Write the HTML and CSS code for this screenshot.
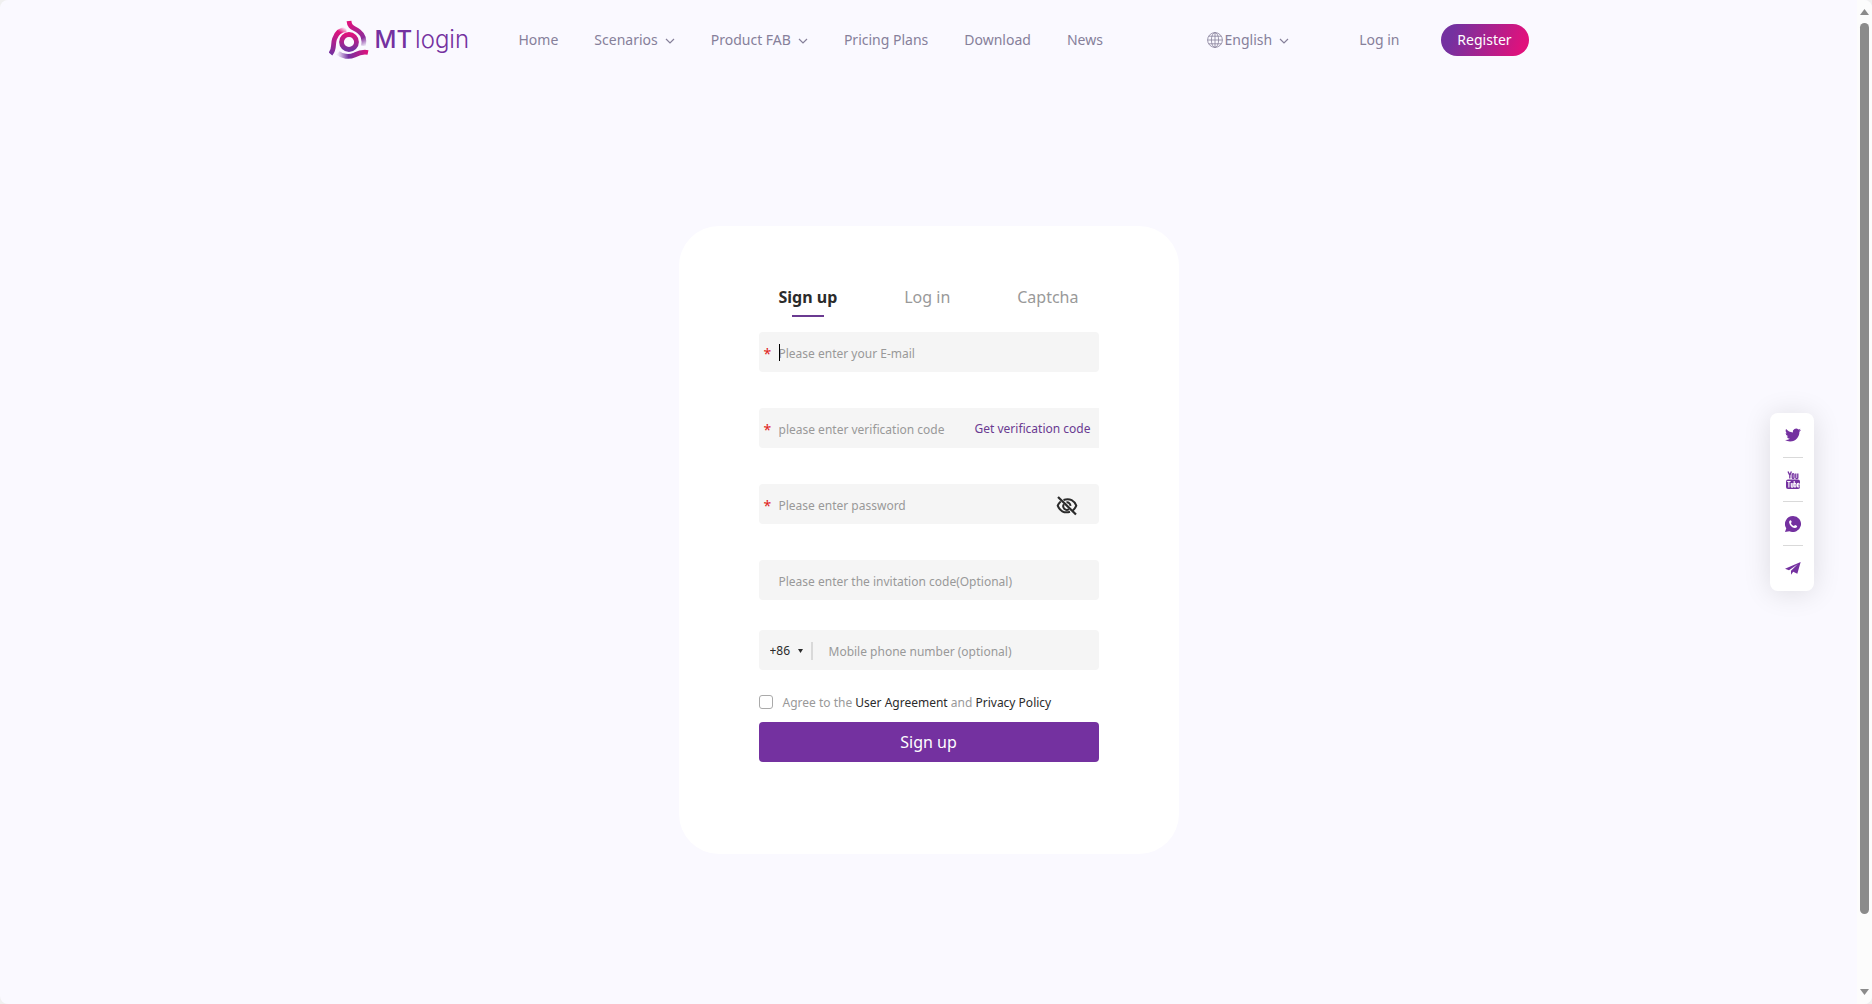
FILE: index.html
```html
<!DOCTYPE html>
<html lang="en">
<head>
<meta charset="utf-8">
<meta name="viewport" content="width=device-width, initial-scale=1">
<title>MT login - Sign up</title>
<link rel="stylesheet" href="styles.css">
</head>
<body>
<div class="window">
  <div class="page">
    <header class="header">
      <a class="logo" href="#" aria-label="MT login">
        <svg class="logo-mark" viewBox="0 0 40 40" fill="none" stroke-width="4.8" aria-hidden="true">
          <defs>
            <linearGradient id="ga" gradientUnits="userSpaceOnUse" x1="18" y1="9" x2="2" y2="34"><stop offset="0" stop-color="#e8107a" stop-opacity="0"/><stop offset=".22" stop-color="#e0117c"/><stop offset="1" stop-color="#7431a0"/></linearGradient>
            <linearGradient id="gb" gradientUnits="userSpaceOnUse" x1="22" y1="1" x2="35" y2="27"><stop offset="0" stop-color="#e0117c"/><stop offset=".7" stop-color="#8b2c9a"/><stop offset="1" stop-color="#7431a0" stop-opacity="0"/></linearGradient>
            <linearGradient id="gc" gradientUnits="userSpaceOnUse" x1="9" y1="34" x2="39" y2="33"><stop offset="0" stop-color="#7431a0" stop-opacity=".1"/><stop offset=".35" stop-color="#7431a0"/><stop offset="1" stop-color="#e0117c"/></linearGradient>
            <linearGradient id="gd" x1="0" y1="0" x2="0" y2="1"><stop offset="0" stop-color="#dc137d"/><stop offset="1" stop-color="#7431a0"/></linearGradient>
          </defs>
          <path stroke="url(#ga)" d="M1.5 34C6 29 3.5 25 5.5 19C7.500 13 12 9.500 17.500 9.500"/>
          <path stroke="url(#gb)" d="M20 1C20.500 8 25 7.500 30 11.500C34.500 15 35.500 21 34.500 26"/>
          <path stroke="url(#gc)" d="M9 33C13 36.500 20 37.500 25.500 35C30.500 32.500 34 31.500 39 32.500"/>
          <circle cx="20" cy="22" r="7.500" stroke="url(#gd)"/>
        </svg>
        <span class="logo-text"><span class="logo-mt">MT</span><span class="logo-login">login</span></span>
      </a>
      <nav class="nav">
        <a href="#">Home</a>
        <a href="#">Scenarios <svg class="chev" viewBox="0 0 10 6"><path d="M1 1l4 4 4-4"/></svg></a>
        <a href="#">Product FAB <svg class="chev" viewBox="0 0 10 6"><path d="M1 1l4 4 4-4"/></svg></a>
        <a href="#">Pricing Plans</a>
        <a href="#">Download</a>
        <a href="#">News</a>
      </nav>
      <div class="account">
        <button class="lang" type="button">
          <svg class="globe" viewBox="0 0 16 16"><circle cx="8" cy="8" r="7.400"/><ellipse cx="8" cy="8" rx="3.600" ry="7.400"/><path d="M8 .5v15M.5 8h15M1.700 4.200h12.600M1.700 11.800h12.600"/></svg>
          English
          <svg class="chev" viewBox="0 0 10 6"><path d="M1 1l4 4 4-4"/></svg>
        </button>
        <a class="login-link" href="#">Log in</a>
        <a class="register" href="#">Register</a>
      </div>
    </header>

    <main class="main">
      <form class="card">
        <div class="tabs">
          <button class="tab active" type="button">Sign up</button>
          <button class="tab" type="button">Log in</button>
          <button class="tab" type="button">Captcha</button>
        </div>
        <div class="fields">
          <div class="field required"><input class="text" type="email" aria-label="E-mail" placeholder="Please enter your E-mail"><span class="caret"></span></div>
          <div class="field required square"><input class="text" type="text" aria-label="Verification code" placeholder="please enter verification code"><button class="get-code" type="button">Get verification code</button></div>
          <div class="field required"><input class="text" type="password" aria-label="Password" placeholder="Please enter password">
            <button class="eye" type="button" aria-label="Show password"><svg viewBox="0 0 22 20" fill="none" stroke="#2b2b2b" stroke-width="2"><path d="M7.500 4C14 1.500 18.500 5 20.300 9.700C19.500 11.700 18.300 13.300 16.700 14.500M14 15.800C8 17.700 3.500 14.500 1.700 9.700C2.400 7.900 3.400 6.500 4.700 5.400"/><path d="M7.900 8.200a3.600 3.600 0 0 0 5 5M10.500 6.300a3.500 3.500 0 0 1 3.900 3.600"/><path stroke-width="2.200" d="M2 1l18 17.500"/></svg></button>
          </div>
          <div class="field"><input class="text" type="text" aria-label="Invitation code" placeholder="Please enter the invitation code(Optional)"></div>
        </div>
        <div class="field phone">
          <div class="code-box">
            <select class="code" aria-label="Country code"><option>+86</option></select>
            <svg class="arrow" viewBox="0 0 5 4"><path d="M0 0h5L2.500 4z"/></svg>
          </div>
          <input class="text" type="tel" aria-label="Mobile phone number" placeholder="Mobile phone number (optional)">
        </div>
        <div class="agree">
          <input id="agree" type="checkbox">
          <label for="agree">Agree to the <a href="#">User Agreement</a> and <a href="#">Privacy Policy</a></label>
        </div>
        <button class="submit" type="submit">Sign up</button>
      </form>
    </main>
  </div>

  <div class="scrollbar" aria-hidden="true">
    <svg class="sb-arrow" viewBox="0 0 9 6"><path d="M4.500 0L9 6H0z"/></svg>
    <div class="track"><div class="thumb"></div></div>
    <svg class="sb-arrow" viewBox="0 0 9 6"><path d="M0 0h9L4.500 6z"/></svg>
  </div>
</div>

<aside class="social">
  <a href="#" aria-label="Twitter"><svg viewBox="0 0 24 24"><path d="M23.950 4.570a10 10 0 0 1-2.820.770 4.960 4.960 0 0 0 2.160-2.720c-.950.550-2 .950-3.130 1.180a4.920 4.920 0 0 0-8.380 4.480C7.690 8.090 4.070 6.130 1.640 3.160a4.820 4.820 0 0 0-.670 2.480c0 1.710.870 3.210 2.190 4.100a4.900 4.900 0 0 1-2.230-.620v.060a4.920 4.920 0 0 0 3.950 4.830 5 5 0 0 1-2.210.080 4.940 4.940 0 0 0 4.600 3.420A9.870 9.870 0 0 1 0 19.540a13.990 13.990 0 0 0 7.550 2.210c9.050 0 14-7.500 14-13.980 0-.210 0-.420-.020-.630a9.940 9.940 0 0 0 2.460-2.550z"/></svg></a>
  <a href="#" aria-label="YouTube"><svg class="yt" viewBox="0 0 16 18"><g fill="none" stroke="currentColor" stroke-width="1.300"><path d="M3 .5l1.800 3.800L6.400.5M4.800 4v3.500M7.200 3.500v3a.9.900 0 0 0 1.800 0v-3a.9.900 0 0 0-1.800 0zM10.800 2.600v4a.8.800 0 0 0 1.900.2M12.800 2.600v5"/></g><rect x="1" y="8.500" width="14" height="9.500" rx="2"/><g fill="none" stroke="#fff" stroke-width="1.100"><path d="M2.200 10.500h3.400M3.900 10.500v6M6.300 12v3.500a.6.600 0 0 0 1.600 0V12M9.200 10v6.300M9.200 12.800c1-.8 1.700-.4 1.700.4v2c0 .9-.8 1.100-1.700.6M12.400 14h1.700v-1.100c0-.9-1.700-.9-1.700 0v2.300c0 1 1.700 1 1.700 0"/></g></svg></a>
  <a href="#" aria-label="WhatsApp"><svg viewBox="0 0 24 24"><path fill-rule="evenodd" d="M12 0a12 12 0 1 1-5.400 22.700L0 24l1.900-5.500A12 12 0 0 1 12 0zM8.300 6.200c-1.600.4-2.400 1.900-2 3.800.9 4.200 4.200 7.300 8.300 7.900 2 .2 3.500-.8 3.700-2.500 0-.5-2.600-2-3.200-1.800-.7.200-1.100 1.500-1.800 1.300-2.200-.8-3.400-2-4.300-4.100-.2-.6 1-1.100 1.100-1.700.1-.5-.9-3-1.800-2.900z"/></svg></a>
  <a href="#" aria-label="Telegram"><svg viewBox="0 0 24 24"><path d="M23.500 3L0 13l6 2.200L19 6.500 9 16.200V22l3.300-4.300 6.200 3z"/></svg></a>
</aside>
</body>
</html>
```
FILE: styles.css
```css
* { box-sizing: border-box; }

body {
  margin: 0;
  background: #f0f0f0;
  font: 14px/20px "Noto Sans", "Open Sans", sans-serif;
  color: #86809a;
}

a { color: inherit; text-decoration: none; }
button, input, select { font: inherit; color: inherit; }
button { padding: 0; border: 0; background: none; cursor: pointer; }

.window {
  display: flex;
  height: 100vh;
  border-radius: 8px;
  overflow: hidden;
  background: #faf9ff;
}

.page { flex: 1; min-width: 0; overflow: hidden; }

/* header */
.header {
  display: flex;
  align-items: center;
  max-width: 1200px;
  height: 80px;
  margin: 0 auto;
}
.logo { display: flex; align-items: center; gap: 6px; width: 190px; }
.logo-mark { width: 40px; height: 40px; }
.logo-text {
  display: flex;
  gap: 3px;
  font: 24px/32px Inter, sans-serif;
  color: #7431a0;
}
.logo-mt { font-weight: 500; }
.logo-login { font-weight: 300; }

.nav { display: flex; gap: 36px; }
.nav a, .lang { display: flex; align-items: center; }
.chev {
  width: 10px;
  height: 6px;
  margin-left: 7px;
  margin-top: 2px;
  fill: none;
  stroke: currentColor;
  stroke-width: 1.2;
}
.account { display: flex; align-items: center; margin-left: auto; }
.globe {
  width: 16px;
  height: 16px;
  margin-right: 2px;
  fill: none;
  stroke: currentColor;
  stroke-width: .8;
}
.login-link { margin: 0 41px 0 70px; }
.register {
  width: 88px;
  border-radius: 16px;
  background: linear-gradient(110deg, #7431a0 15%, #e0117c 90%);
  color: #fff;
  line-height: 32px;
  text-align: center;
}

/* sign-up card */
.main { padding: 146px 20px; }
.card {
  display: flex;
  flex-direction: column;
  max-width: 500px;
  margin: 0 auto;
  padding: 59px 80px 92px;
  border-radius: 40px;
  background: #fff;
  font-size: 12px;
}
.tabs { display: flex; justify-content: space-between; padding: 0 20px; margin-bottom: 15px; }
.tab {
  position: relative;
  height: 32px;
  padding-bottom: 8px;
  font-size: 16px;
  line-height: 24px;
  color: #999;
}
.tab.active { font-weight: 700; color: #2b2b2b; }
.tab.active::after {
  content: "";
  position: absolute;
  left: 50%;
  bottom: 0;
  width: 32px;
  height: 2px;
  margin-left: -16px;
  background: #6a3a91;
}

.fields { display: grid; gap: 36px; }
.field {
  position: relative;
  display: flex;
  align-items: center;
  height: 40px;
  border-radius: 4px;
  background: #f5f5f5;
}
.square { border-radius: 4px 0 0 4px; }
.required::before {
  content: "*";
  position: absolute;
  left: 5px;
  top: 12px;
  font-size: 14px;
  color: #e02020;
}
.text {
  flex: 1;
  min-width: 0;
  height: 40px;
  padding: 2px 0 0 20px;
  border: 0;
  outline: 0;
  background: none;
  color: #2b2b2b;
}
.text::placeholder { color: #999; opacity: 1; }
.caret {
  position: absolute;
  left: 20px;
  top: 12px;
  width: 1px;
  height: 17px;
  background: #000;
}
.get-code { margin-right: 8px; padding-top: 2px; color: #6a3a91; }
.eye { display: flex; width: 22px; height: 20px; margin: 4px 21px 0 0; }
.eye svg { width: 22px; height: 20px; }

.phone { margin: 30px 0 22px; }
.code-box {
  display: flex;
  align-items: center;
  width: 54px;
  height: 18px;
  margin-top: 2px;
  padding-left: 11px;
  border-right: 2px solid #d9d9d9;
}
.code {
  appearance: none;
  width: 28px;
  padding: 0;
  border: 0;
  background: none;
  color: #2b2b2b;
}
.arrow { width: 5px; height: 4px; fill: #2b2b2b; }
.phone .text { padding-left: 16px; }

.agree { display: flex; align-items: center; gap: 10px; height: 20px; margin-bottom: 10px; color: #999; }
.agree label { padding-top: 2px; }
.agree input {
  appearance: none;
  width: 14px;
  height: 14px;
  margin: 0;
  border: 1px solid #aaa;
  border-radius: 3px;
  background: #fff;
}
.agree a { color: #2b2b2b; }

.submit {
  height: 40px;
  border-radius: 4px;
  background: #7431a0;
  color: #fff;
  font-size: 16px;
}

/* floating social links */
.social {
  position: fixed;
  right: 58px;
  top: 50%;
  transform: translateY(-50%);
  width: 44px;
  padding: 0 11px 2px 13px;
  border-radius: 8px;
  background: #fff;
  box-shadow: 0 2px 28px rgba(0, 0, 0, .12);
}
.social a {
  display: flex;
  align-items: center;
  justify-content: center;
  height: 44px;
  color: #7431a0;
}
.social a + a { border-top: 1px solid #d9d9d9; }
.social svg { width: 16px; height: 16px; fill: currentColor; }
.social .yt { height: 18px; }

/* window scrollbar */
.scrollbar {
  display: flex;
  flex-direction: column;
  align-items: center;
  width: 15px;
  padding: 9px 0;
  background: #fcfcfc;
}
.sb-arrow { width: 9px; height: 6px; fill: #8b8b8b; }
.track { flex: 1; width: 9px; padding: 8px 0; }
.thumb { height: 93%; border-radius: 5px; background: #8b8b8b; }
```
